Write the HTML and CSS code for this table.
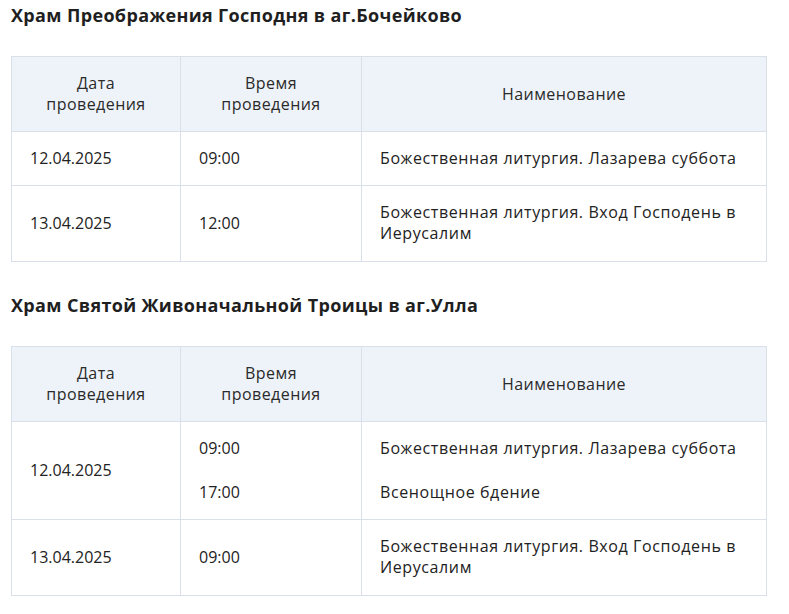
FILE: index.html
```html
<!DOCTYPE html>
<html lang="ru">
<head>
<meta charset="utf-8">
<link rel="stylesheet" href="styles.css">
</head>
<body>
<div class="page">
  <h2 class="title">Храм Преображения Господня в аг.Бочейково</h2>
  <table class="sched">
    <colgroup><col class="c1"><col class="c2"><col class="c3"></colgroup>
    <thead>
      <tr><th>Дата<br>проведения</th><th>Время<br>проведения</th><th>Наименование</th></tr>
    </thead>
    <tbody>
      <tr><td>12.04.2025</td><td>09:00</td><td class="name">Божественная литургия. Лазарева суббота</td></tr>
      <tr class="tall"><td>13.04.2025</td><td>12:00</td><td class="name">Божественная литургия. Вход Господень в Иерусалим</td></tr>
    </tbody>
  </table>

  <h2 class="title">Храм Святой Живоначальной Троицы в аг.Улла</h2>
  <table class="sched">
    <colgroup><col class="c1"><col class="c2"><col class="c3"></colgroup>
    <thead>
      <tr><th>Дата<br>проведения</th><th>Время<br>проведения</th><th>Наименование</th></tr>
    </thead>
    <tbody>
      <tr><td>12.04.2025</td><td><p>09:00</p><p>17:00</p></td><td class="name"><p>Божественная литургия. Лазарева суббота</p><p>Всенощное бдение</p></td></tr>
      <tr class="tall"><td>13.04.2025</td><td>09:00</td><td class="name">Божественная литургия. Вход Господень в Иерусалим</td></tr>
    </tbody>
  </table>
</div>
</body>
</html>
```

FILE: styles.css
```css
html, body {
  margin: 0;
  padding: 0;
  background: #ffffff;
}
.page {
  padding: 4px 22px 0 11px;
  font-family: "Open Sans", "Noto Sans", sans-serif;
  color: #222222;
}
.title {
  margin: 0 0 30px;
  font-size: 18px;
  line-height: 22px;
  font-weight: 700;
  letter-spacing: 0.35px;
  color: #1f1f1f;
}
.sched {
  width: 756px;
  border-collapse: collapse;
  margin-bottom: 32px;
  font-size: 16px;
  line-height: 21px;
}
.c1 { width: 169px; }
.c2 { width: 181px; }
.c3 { width: auto; }
.sched th, .sched td {
  border: 1px solid #d9e0ea;
  padding: 16px 18px;
  vertical-align: middle;
}
.sched tr.tall td {
  padding-bottom: 17px;
}
.sched th {
  background: #eef3f9;
  font-weight: 400;
  text-align: center;
  letter-spacing: 0.45px;
  color: #2a2a2a;
}
.sched td {
  text-align: left;
}
.sched td.name {
  letter-spacing: 0.6px;
}
.sched p {
  margin: 0 0 23px;
}
.sched p:last-child {
  margin-bottom: 0;
}
```
